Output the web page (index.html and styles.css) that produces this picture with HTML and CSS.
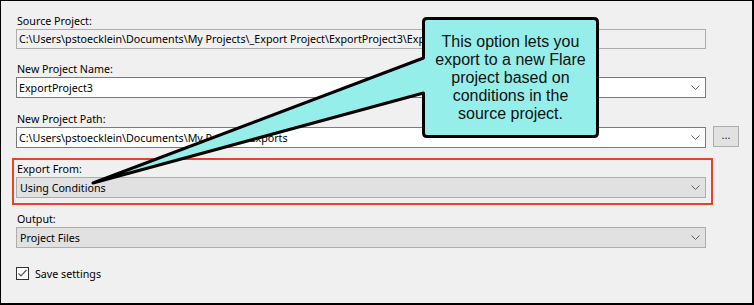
FILE: index.html
```html
<!DOCTYPE html>
<html lang="en">
<head>
    <meta charset="UTF-8">
    <meta name="viewport" content="width=device-width, initial-scale=1.0">
    <title>Export Project</title>
    <link rel="stylesheet" href="styles.css">
</head>
<body>

    <div class="dialog">
        <div class="field field-source">
            <div class="label">Source Project:</div>
            <div class="textbox">C:\Users\pstoecklein\Documents\My Projects\_Export Project\ExportProject3\ExportProject3.flprj</div>
        </div>

        <div class="field">
            <div class="label">New Project Name:</div>
            <div class="combo combo-white">
                <span class="combo-text">ExportProject3</span>
                <svg class="chevron" width="9" height="5" viewBox="0 0 9 5"><polyline points="0.5,0.5 4.5,4.5 8.5,0.5" /></svg>
            </div>
        </div>

        <div class="field">
            <div class="label">New Project Path:</div>
            <div class="row">
                <div class="combo combo-white">
                    <span class="combo-text">C:\Users\pstoecklein\Documents\My Projects\Exports</span>
                    <svg class="chevron" width="9" height="5" viewBox="0 0 9 5"><polyline points="0.5,0.5 4.5,4.5 8.5,0.5" /></svg>
                </div>
                <button class="browse">...</button>
            </div>
        </div>

        <div class="highlight">
            <div class="label">Export From:</div>
            <div class="combo">
                <span class="combo-text">Using Conditions</span>
                <svg class="chevron" width="9" height="5" viewBox="0 0 9 5"><polyline points="0.5,0.5 4.5,4.5 8.5,0.5" /></svg>
            </div>
        </div>

        <div class="field">
            <div class="label">Output:</div>
            <div class="combo">
                <span class="combo-text">Project Files</span>
                <svg class="chevron" width="9" height="5" viewBox="0 0 9 5"><polyline points="0.5,0.5 4.5,4.5 8.5,0.5" /></svg>
            </div>
        </div>

        <label class="check">
            <span class="check-box">
                <svg width="11" height="11" viewBox="0 0 11 11"><polyline points="1.5,5.5 4,8 9.5,2" /></svg>
            </span>
            Save settings
        </label>

        <!-- callout over the form -->
        <div class="callout">
            <svg class="callout-shape" width="754" height="305" viewBox="0 0 754 305">
                <path d="M 427,18.5 L 594,18.5 Q 597.5,18.5 597.5,22 L 597.5,133 Q 597.5,136.5 594,136.5 L 427,136.5 Q 423.5,136.5 423.5,133 L 423.5,93 L 93,183 L 423.5,58 L 423.5,22 Q 423.5,18.5 427,18.5 Z" />
            </svg>
            <div class="callout-text">This option lets you export to a new Flare project based on conditions in the source project.</div>
        </div>
    </div>

</body>
</html>
```

FILE: styles.css
```css
body {
    margin: 0;
    font-family: "Noto Sans", "Open Sans", sans-serif;
    font-size: 10.7px;
    color: #000;
}

.dialog {
    position: relative;
    width: 754px;
    height: 305px;
    box-sizing: border-box;
    background-color: #f0f0f0;
    border: 1px solid #000;
    border-right-width: 2px;
    border-bottom-width: 2px;
    padding: 12px 0 0 15px;
    overflow: hidden;
}

.label {
    height: 16px;
    line-height: 16px;
    padding-left: 1px;
}

.field {
    margin-bottom: 13px;
}

.field-source {
    margin-bottom: 12px;
}

.textbox {
    width: 690px;
    height: 20px;
    box-sizing: border-box;
    border: 1px solid #adadad;
    background-color: #f0f0f0;
    line-height: 18px;
    padding-left: 2px;
    white-space: nowrap;
    overflow: hidden;
}

.row {
    display: flex;
    align-items: flex-start;
    gap: 7px;
}

.combo {
    width: 690px;
    height: 21px;
    box-sizing: border-box;
    border: 1px solid #adadad;
    background-color: #e1e1e1;
    display: flex;
    align-items: center;
    padding: 0 5px 0 3px;
}

.combo-white {
    background-color: #fff;
    border-color: #7a7a7a;
    padding-left: 2px;
}

.combo-text {
    flex: 1;
    white-space: nowrap;
    overflow: hidden;
}

.chevron polyline {
    fill: none;
    stroke: #606060;
    stroke-width: 1;
}

.browse {
    width: 26px;
    height: 21px;
    margin-top: -1px;
    padding: 0 0 4px;
    border: 1px solid #adadad;
    background-color: #e1e1e1;
    font-family: "Noto Sans", sans-serif;
    font-size: 11px;
    color: #1a1a50;
}

.highlight {
    width: fit-content;
    margin: -3px 0 6px -4px;
    border: 2px solid #e8432a;
    padding: 1px 5px 5px 2px;
}

.check {
    display: flex;
    align-items: center;
    gap: 6px;
    margin-top: 19px;
    height: 13px;
}

.check-box {
    width: 13px;
    height: 13px;
    box-sizing: border-box;
    border: 1px solid #333;
    background-color: #fff;
    display: flex;
}

.check-box polyline {
    fill: none;
    stroke: #555;
    stroke-width: 1.2;
}

.callout {
    position: absolute;
    left: -1px;
    top: -1px;
    width: 754px;
    height: 305px;
}

.callout-shape {
    position: absolute;
    left: 0;
    top: 0;
}

.callout-shape path {
    fill: #96eeea;
    stroke: #000;
    stroke-width: 3;
    stroke-linejoin: round;
}

.callout-text {
    position: absolute;
    left: 428px;
    top: 23px;
    width: 165px;
    height: 109px;
    display: flex;
    align-items: center;
    justify-content: center;
    text-align: center;
    font-family: "Liberation Sans", Arial, sans-serif;
    font-size: 16px;
    line-height: 18px;
    color: #111;
}
```
